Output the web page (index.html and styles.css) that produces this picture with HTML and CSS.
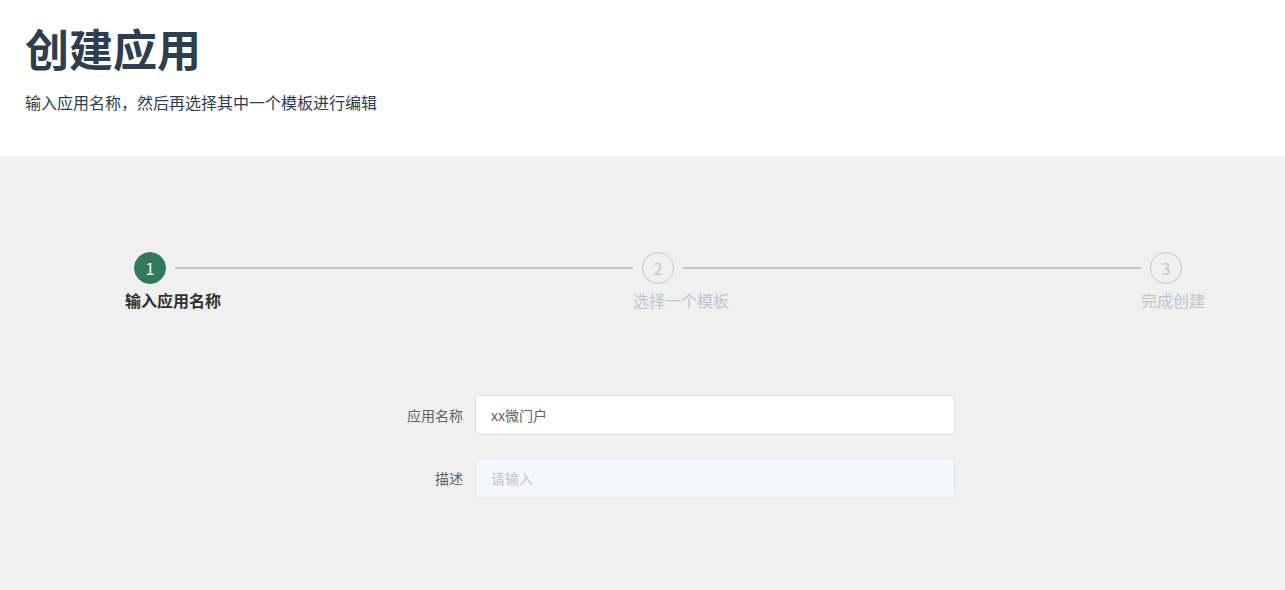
FILE: index.html
```html
<!DOCTYPE html>
<html lang="zh-CN">
<head>
  <meta charset="UTF-8">
  <meta name="viewport" content="width=device-width, initial-scale=1.0">
  <title>创建应用</title>
  <link rel="stylesheet" href="styles.css">
</head>
<body>
  <div class="page-header">
    <h1>创建应用</h1>
    <p>输入应用名称，然后再选择其中一个模板进行编辑</p>
  </div>

  <div class="page-body">
    <div class="steps">
      <div class="step is-active">
        <div class="step-head">
          <div class="step-icon">1</div>
          <div class="step-line"></div>
        </div>
        <div class="step-title">输入应用名称</div>
      </div>
      <div class="step">
        <div class="step-head">
          <div class="step-icon">2</div>
          <div class="step-line"></div>
        </div>
        <div class="step-title">选择一个模板</div>
      </div>
      <div class="step is-last">
        <div class="step-head">
          <div class="step-icon">3</div>
        </div>
        <div class="step-title">完成创建</div>
      </div>
    </div>

    <form class="app-form">
      <div class="form-item">
        <label for="appName">应用名称</label>
        <input type="text" id="appName" value="xx微门户">
      </div>
      <div class="form-item">
        <label for="appDesc">描述</label>
        <input type="text" id="appDesc" class="is-disabled" placeholder="请输入">
      </div>
    </form>
  </div>
</body>
</html>
```

FILE: styles.css
```css
body {
  margin: 0;
  font-family: "Noto Sans CJK SC", "Noto Sans", sans-serif;
  background-color: #f0f0f0;
  color: #2c3e50;
}
.page-header {
  background-color: white;
  padding: 20px 25px 42px;
}
.page-header h1 {
  margin: 0;
  font-size: 44px;
  line-height: 56px;
  font-weight: bold;
  color: #2c3e50;
}
.page-header p {
  margin: 14px 0 0;
  font-size: 16px;
  line-height: 24px;
  color: #2c3e50;
}
.page-body {
  height: 434px;
  padding-top: 96px;
  box-sizing: border-box;
}
.steps {
  display: flex;
  padding-left: 125px;
}
.step {
  width: 508px;
}
.step.is-last {
  width: auto;
}
.step-head {
  display: flex;
  align-items: center;
  height: 32px;
  padding-left: 9px;
}
.step-icon {
  width: 30px;
  height: 30px;
  border-radius: 50%;
  border: 1px solid #c0c4cc;
  color: #c0c4cc;
  font-size: 16px;
  display: flex;
  align-items: center;
  justify-content: center;
  flex-shrink: 0;
}
.step-line {
  flex: 1;
  height: 2px;
  background-color: #c0c4cc;
  margin-left: 9px;
}
.step-title {
  margin-top: 4px;
  font-size: 16px;
  line-height: 24px;
  color: #c0c4cc;
}
.step.is-active .step-icon {
  background-color: #2f7a5c;
  border-color: #2f7a5c;
  color: white;
}
.step.is-active .step-title {
  color: #303133;
  font-weight: bold;
}
.app-form {
  margin: 83px 0 0 375px;
  width: 580px;
}
.form-item {
  display: flex;
  align-items: center;
  margin-bottom: 23px;
}
.form-item label {
  width: 100px;
  padding-right: 12px;
  box-sizing: border-box;
  text-align: right;
  font-size: 14px;
  color: #606266;
}
.form-item input {
  flex: 1;
  height: 40px;
  box-sizing: border-box;
  border: 1px solid #dcdfe6;
  border-radius: 4px;
  background-color: white;
  padding: 0 15px;
  font-family: inherit;
  font-size: 14px;
  color: #606266;
  outline: none;
}
.form-item input.is-disabled {
  background-color: #f5f7fa;
  border-color: #e4e7ed;
}
.form-item input::placeholder {
  color: #c0c4cc;
}
```
